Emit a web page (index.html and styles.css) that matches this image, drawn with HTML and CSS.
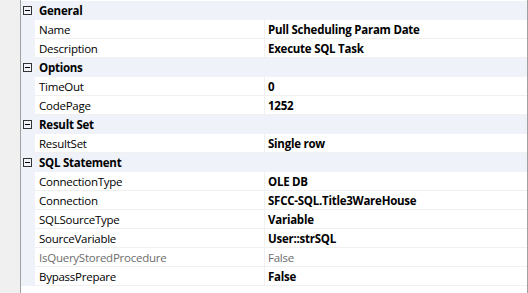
FILE: index.html
```html
<!DOCTYPE html>
<html lang="en">
<head>
    <meta charset="UTF-8">
    <title>Properties</title>
    <link rel="stylesheet" href="styles.css">
</head>
<body>
    <div class="panel">
        <div class="gutter"></div>
        <div class="grid">
            <div class="category"><span class="toggle"></span>General</div>
            <div class="prop"><span class="name">Name</span><span class="value">Pull Scheduling Param Date</span></div>
            <div class="prop"><span class="name">Description</span><span class="value">Execute SQL Task</span></div>

            <div class="category"><span class="toggle"></span>Options</div>
            <div class="prop"><span class="name">TimeOut</span><span class="value">0</span></div>
            <div class="prop"><span class="name">CodePage</span><span class="value">1252</span></div>

            <div class="category"><span class="toggle"></span>Result Set</div>
            <div class="prop"><span class="name">ResultSet</span><span class="value">Single row</span></div>

            <div class="category"><span class="toggle"></span>SQL Statement</div>
            <div class="prop"><span class="name">ConnectionType</span><span class="value">OLE DB</span></div>
            <div class="prop"><span class="name">Connection</span><span class="value">SFCC-SQL.Title3WareHouse</span></div>
            <div class="prop"><span class="name">SQLSourceType</span><span class="value">Variable</span></div>
            <div class="prop"><span class="name">SourceVariable</span><span class="value">User::strSQL</span></div>
            <div class="prop disabled"><span class="name">IsQueryStoredProcedure</span><span class="value">False</span></div>
            <div class="prop"><span class="name">BypassPrepare</span><span class="value">False</span></div>
        </div>
    </div>
</body>
</html>
```
FILE: styles.css
```css
body {
    margin: 0;
    padding: 0;
    background-color: #ffffff;
    font-family: "Open Sans", "Noto Sans", sans-serif;
    font-size: 11.5px;
    letter-spacing: -0.25px;
    color: #000;
}
.panel {
    display: flex;
    width: 527px;
    height: 293px;
    border-right: 1px solid #a0a0a0;
}
.gutter {
    width: 20px;
    background-color: #f0f0f0;
    border-right: 1px solid #a0a0a0;
}
.grid {
    flex: 1;
    display: flex;
    flex-direction: column;
    padding-top: 1px;
    background-color: #fff;
}
.category {
    height: 19px;
    display: flex;
    align-items: center;
    background-color: #eff2f8;
    font-weight: bold;
    box-sizing: border-box;
}
.toggle {
    width: 9px;
    height: 9px;
    box-sizing: border-box;
    border: 1px solid #333;
    margin: 0 7px 0 2px;
    position: relative;
}
.toggle::after {
    content: "";
    position: absolute;
    left: 1px;
    top: 3px;
    width: 5px;
    height: 1px;
    background-color: #000;
}
.prop {
    height: 19px;
    display: flex;
    box-sizing: border-box;
    border-left: 14px solid #eff2f8;
}
.prop .name,
.prop .value {
    display: flex;
    align-items: center;
    border-bottom: 1px solid #f0f0f0;
}
.name {
    width: 230px;
    padding-left: 4px;
    box-sizing: border-box;
    border-right: 1px solid #f0f0f0;
}
.value {
    flex: 1;
    padding-left: 3px;
    font-weight: bold;
}
.disabled .name,
.disabled .value {
    color: #6d6d6d;
    font-weight: normal;
}
```
